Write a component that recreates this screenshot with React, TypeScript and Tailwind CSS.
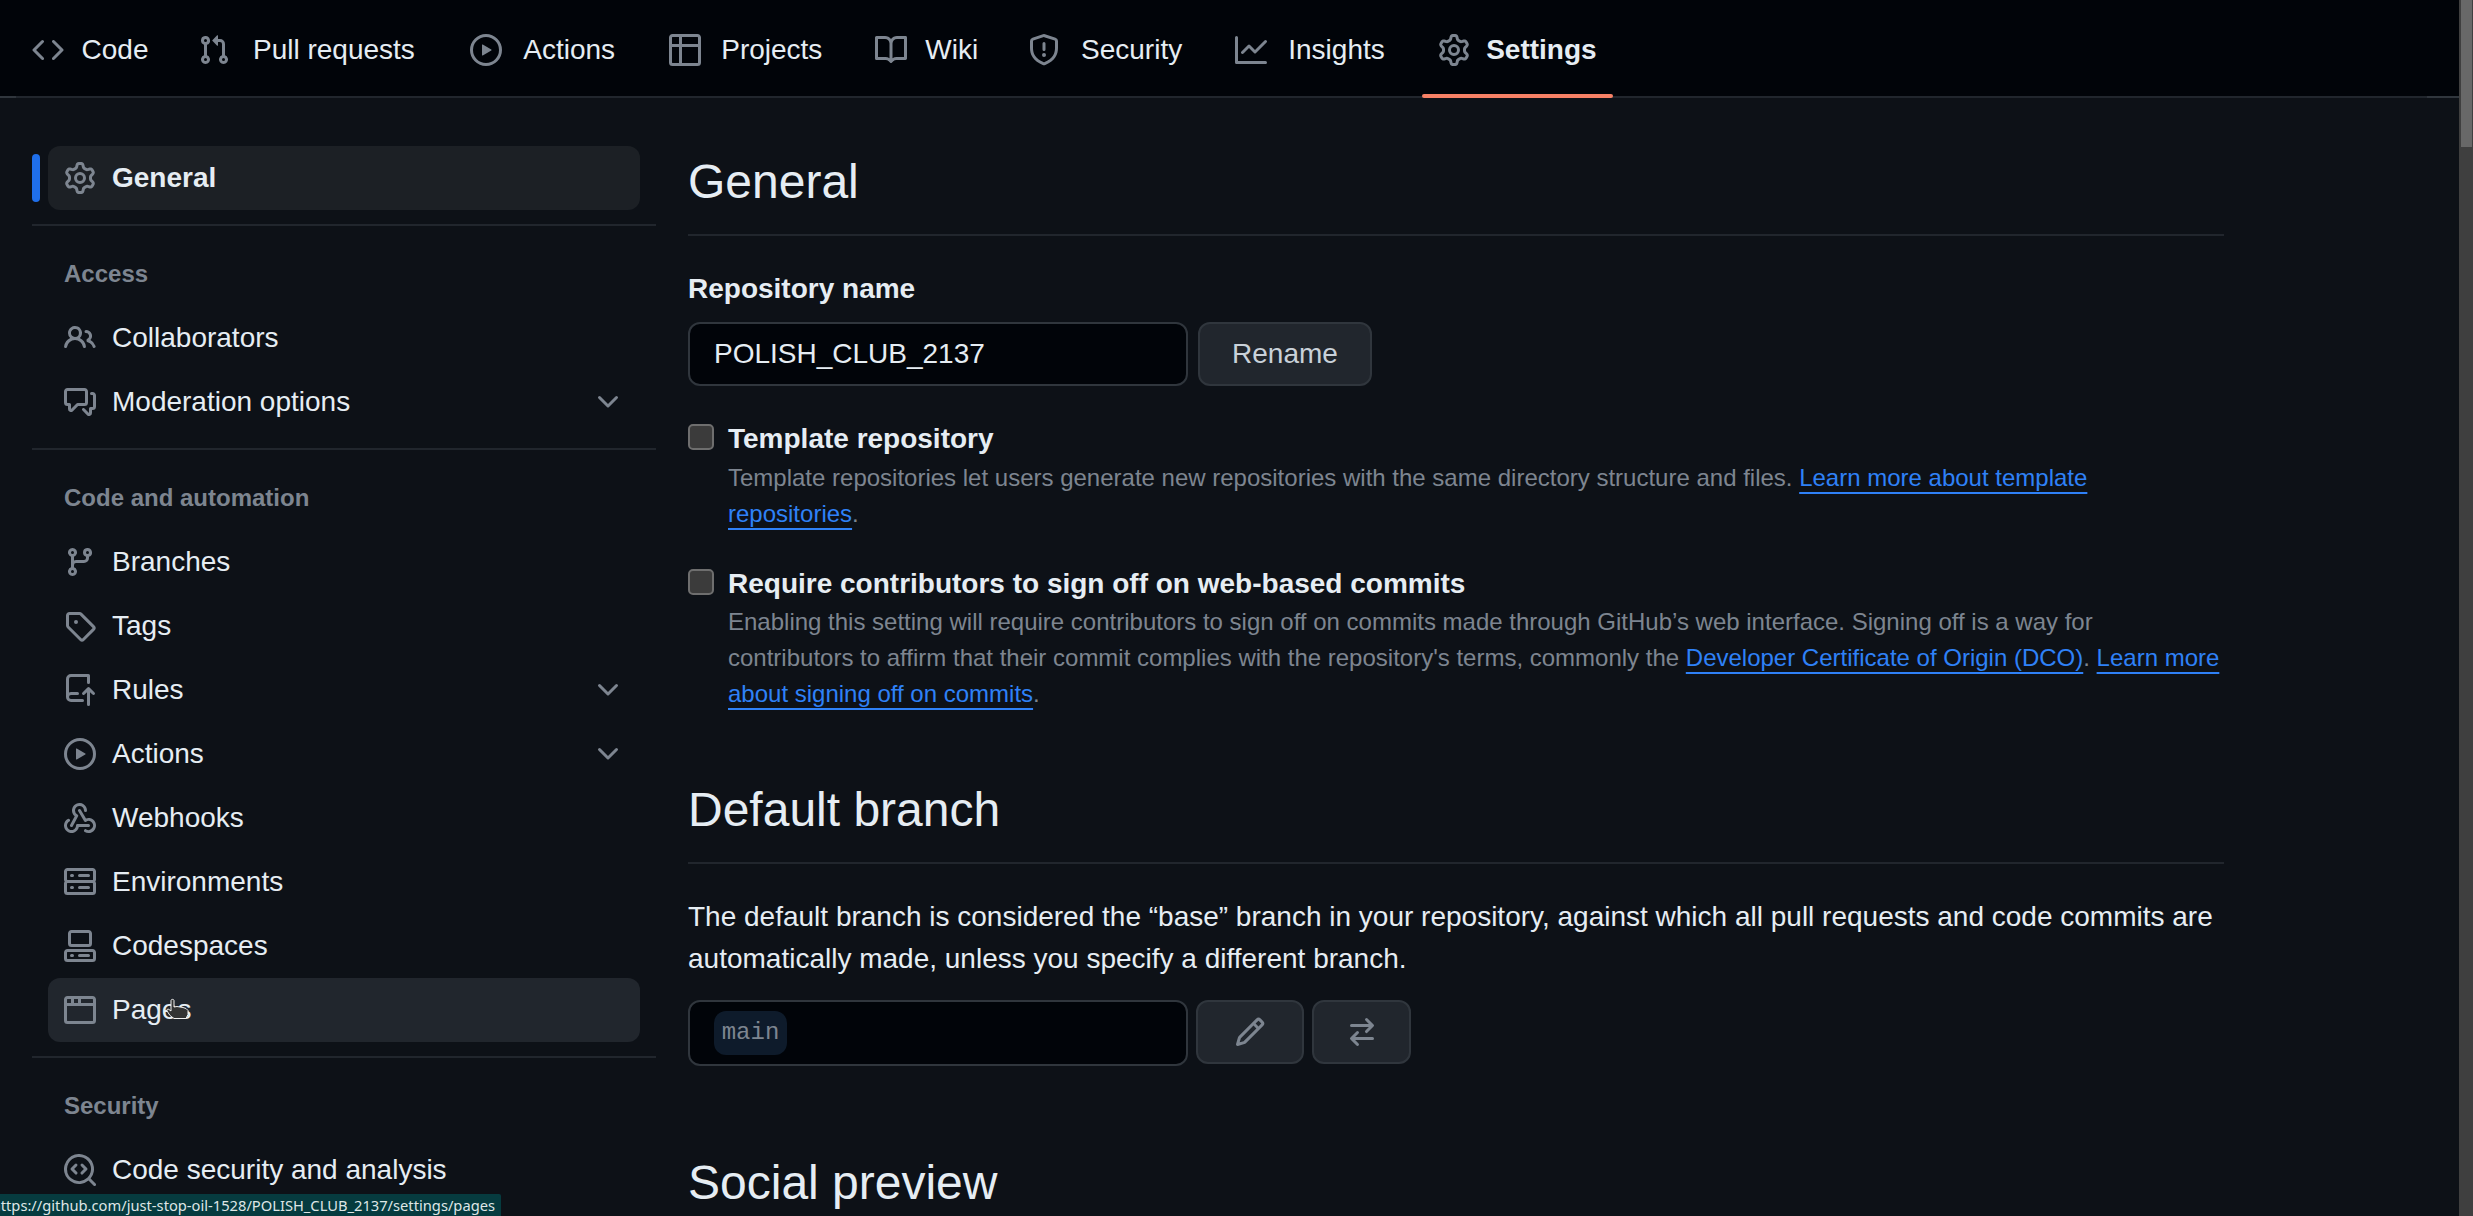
import React from "react";

type Ic = React.ComponentType<{ size?: number; className?: string }>;

const oct = (...d: string[]): Ic =>
  function Octicon({ size = 32, className }) {
    return (
      <svg width={size} height={size} viewBox="0 0 16 16" fill="currentColor" className={className}>
        {d.map((p, i) => (
          <path key={i} d={p} />
        ))}
      </svg>
    );
  };

const GoCode = oct("m11.28 3.22 4.25 4.25a.75.75 0 0 1 0 1.06l-4.25 4.25a.749.749 0 0 1-1.275-.326.749.749 0 0 1 .215-.734L13.94 8l-3.72-3.72a.749.749 0 0 1 .326-1.275.749.749 0 0 1 .734.215Zm-6.56 0a.751.751 0 0 1 1.042.018.751.751 0 0 1 .018 1.042L2.06 8l3.72 3.72a.749.749 0 0 1-.326 1.275.749.749 0 0 1-.734-.215L.47 8.53a.75.75 0 0 1 0-1.06Z");
const GoPull = oct("M1.5 3.25a2.25 2.25 0 1 1 3 2.122v5.256a2.251 2.251 0 1 1-1.5 0V5.372A2.25 2.25 0 0 1 1.5 3.25Zm5.677-.177L9.573.677A.25.25 0 0 1 10 .854V2.5h1A2.5 2.5 0 0 1 13.5 5v5.628a2.251 2.251 0 1 1-1.5 0V5a1 1 0 0 0-1-1h-1v1.646a.25.25 0 0 1-.427.177L7.177 3.427a.25.25 0 0 1 0-.354ZM3.75 2.5a.75.75 0 1 0 0 1.5.75.75 0 0 0 0-1.5Zm0 9.5a.75.75 0 1 0 0 1.5.75.75 0 0 0 0-1.5Zm8.25.75a.75.75 0 1 0 1.5 0 .75.75 0 0 0-1.5 0Z");
const GoPlay = oct("M8 0a8 8 0 1 1 0 16A8 8 0 0 1 8 0ZM1.5 8a6.5 6.5 0 1 0 13 0 6.5 6.5 0 0 0-13 0Zm4.879-2.773 4.264 2.559a.25.25 0 0 1 0 .428l-4.264 2.559A.25.25 0 0 1 6 10.559V5.442a.25.25 0 0 1 .379-.215Z");
const GoTable = oct("M0 1.75C0 .784.784 0 1.75 0h12.5C15.216 0 16 .784 16 1.75v12.5A1.75 1.75 0 0 1 14.25 16H1.75A1.75 1.75 0 0 1 0 14.25ZM6.5 6.5v8h7.75a.25.25 0 0 0 .25-.25V6.5Zm8-1.5V1.75a.25.25 0 0 0-.25-.25H6.5V5Zm-13 1.5v7.75c0 .138.112.25.25.25H5v-8ZM5 5V1.5H1.75a.25.25 0 0 0-.25.25V5Z");
const GoBook = oct("M0 1.75A.75.75 0 0 1 .75 1h4.253c1.227 0 2.317.59 3 1.501A3.743 3.743 0 0 1 11.006 1h4.245a.75.75 0 0 1 .75.75v10.5a.75.75 0 0 1-.75.75h-4.507a2.25 2.25 0 0 0-1.591.659l-.622.621a.75.75 0 0 1-1.06 0l-.622-.621A2.25 2.25 0 0 0 5.258 13H.75a.75.75 0 0 1-.75-.75Zm7.251 10.324.004-5.073-.002-2.253A2.25 2.25 0 0 0 5.003 2.5H1.5v9h3.757a3.75 3.75 0 0 1 1.994.574ZM8.755 4.75l-.004 7.322a3.752 3.752 0 0 1 1.992-.572H14.5v-9h-3.495a2.25 2.25 0 0 0-2.25 2.25Z");
const GoShield = oct("M7.467.133a1.748 1.748 0 0 1 1.066 0l5.25 1.68A1.75 1.75 0 0 1 15 3.48V7c0 1.566-.32 3.182-1.303 4.682-.983 1.498-2.585 2.813-5.032 3.855a1.697 1.697 0 0 1-1.33 0c-2.447-1.042-4.049-2.357-5.032-3.855C1.32 10.182 1 8.566 1 7V3.48a1.75 1.75 0 0 1 1.217-1.667Zm.61 1.429a.25.25 0 0 0-.153 0l-5.25 1.68a.25.25 0 0 0-.174.238V7c0 1.358.275 2.666 1.057 3.86.784 1.194 2.121 2.34 4.366 3.297a.196.196 0 0 0 .154 0c2.245-.956 3.582-2.104 4.366-3.298C13.225 9.666 13.5 8.36 13.5 7V3.48a.251.251 0 0 0-.174-.237l-5.25-1.68ZM8.75 4.75v3a.75.75 0 0 1-1.5 0v-3a.75.75 0 0 1 1.5 0ZM9 10.5a1 1 0 1 1-2 0 1 1 0 0 1 2 0Z");
const GoGraph = oct("M1.5 1.75V13.5h13.75a.75.75 0 0 1 0 1.5H.75a.75.75 0 0 1-.75-.75V1.75a.75.75 0 0 1 1.5 0Zm14.28 2.53-5.25 5.25a.75.75 0 0 1-1.06 0L7 7.06 4.28 9.78a.751.751 0 0 1-1.042-.018.751.751 0 0 1-.018-1.042l3.25-3.25a.75.75 0 0 1 1.06 0L10 7.94l4.72-4.72a.751.751 0 0 1 1.042.018.751.751 0 0 1 .018 1.042Z");
const GoGear = oct("M8 0a8.2 8.2 0 0 1 .701.031C9.444.095 9.99.645 10.16 1.29l.288 1.107c.018.066.079.158.212.224.231.114.454.243.668.386.123.082.233.09.299.071l1.103-.303c.644-.176 1.392.021 1.82.63.27.385.506.792.704 1.218.315.675.111 1.422-.364 1.891l-.814.806c-.049.048-.098.147-.088.294.016.257.016.515 0 .772-.01.147.038.246.088.294l.814.806c.475.469.679 1.216.364 1.891a7.977 7.977 0 0 1-.704 1.217c-.428.61-1.176.807-1.82.63l-1.102-.302c-.067-.019-.177-.011-.3.071a5.909 5.909 0 0 1-.668.386c-.133.066-.194.158-.211.224l-.29 1.106c-.168.646-.715 1.196-1.458 1.26a8.006 8.006 0 0 1-1.402 0c-.743-.064-1.289-.614-1.458-1.26l-.289-1.106c-.018-.066-.079-.158-.212-.224a5.738 5.738 0 0 1-.668-.386c-.123-.082-.233-.09-.299-.071l-1.103.303c-.644.176-1.392-.021-1.82-.63a8.12 8.12 0 0 1-.704-1.218c-.315-.675-.111-1.422.363-1.891l.815-.806c.05-.048.098-.147.088-.294a6.214 6.214 0 0 1 0-.772c.01-.147-.038-.246-.088-.294l-.815-.806C.635 6.045.431 5.298.746 4.623a7.92 7.92 0 0 1 .704-1.217c.428-.61 1.176-.807 1.82-.63l1.102.302c.067.019.177.011.3-.071.214-.143.437-.272.668-.386.133-.066.194-.158.211-.224l.29-1.106C6.009.645 6.556.095 7.299.03 7.53.01 7.764 0 8 0Zm-.571 1.525c-.036.003-.108.036-.137.146l-.289 1.105c-.147.561-.549.967-.998 1.189-.173.086-.34.183-.5.29-.417.278-.97.423-1.529.27l-1.103-.303c-.109-.03-.175.016-.195.045-.22.312-.412.644-.573.99-.014.031-.021.11.059.19l.815.806c.411.406.562.957.53 1.456a4.709 4.709 0 0 0 0 .582c.032.499-.119 1.05-.53 1.456l-.815.806c-.081.08-.073.159-.059.19.162.346.353.677.573.989.02.03.085.076.195.046l1.102-.303c.56-.153 1.113-.008 1.53.27.161.107.328.204.501.29.447.222.85.629.997 1.189l.289 1.105c.029.109.101.143.137.146a6.6 6.6 0 0 0 1.142 0c.036-.003.108-.036.137-.146l.289-1.105c.147-.561.549-.967.998-1.189.173-.086.34-.183.5-.29.417-.278.97-.423 1.529-.27l1.103.303c.109.029.175-.016.195-.045.22-.313.411-.644.573-.99.014-.031.021-.11-.059-.19l-.815-.806c-.411-.406-.562-.957-.53-1.456a4.709 4.709 0 0 0 0-.582c-.032-.499.119-1.05.53-1.456l.815-.806c.081-.08.073-.159.059-.19a6.464 6.464 0 0 0-.573-.989c-.02-.03-.085-.076-.195-.046l-1.102.303c-.56.153-1.113.008-1.53-.27a4.44 4.44 0 0 0-.501-.29c-.447-.222-.85-.629-.997-1.189l-.289-1.105c-.029-.11-.101-.143-.137-.146a6.6 6.6 0 0 0-1.142 0ZM11 8a3 3 0 1 1-6 0 3 3 0 0 1 6 0ZM9.5 8a1.5 1.5 0 1 0-3.001.001A1.5 1.5 0 0 0 9.5 8Z");
const GoPeople = oct("M2 5.5a3.5 3.5 0 1 1 5.898 2.549 5.508 5.508 0 0 1 3.034 4.084.75.75 0 1 1-1.482.235 4 4 0 0 0-7.9 0 .75.75 0 0 1-1.482-.236A5.507 5.507 0 0 1 3.102 8.05 3.493 3.493 0 0 1 2 5.5ZM11 4a3.001 3.001 0 0 1 2.22 5.018 5.01 5.01 0 0 1 2.56 3.012.749.749 0 0 1-.885.954.752.752 0 0 1-.549-.514 3.507 3.507 0 0 0-2.522-2.372.75.75 0 0 1-.574-.73v-.352a.75.75 0 0 1 .416-.672A1.5 1.5 0 0 0 11 5.5.75.75 0 0 1 11 4Zm-5.5-.5a2 2 0 1 0-.001 3.999A2 2 0 0 0 5.5 3.5Z");
const GoComment = oct("M1.75 1h8.5c.966 0 1.75.784 1.75 1.75v5.5A1.75 1.75 0 0 1 10.25 10H7.061l-2.574 2.573A1.458 1.458 0 0 1 2 11.543V10h-.25A1.75 1.75 0 0 1 0 8.25v-5.5C0 1.784.784 1 1.75 1ZM1.5 2.75v5.5c0 .138.112.25.25.25h1a.75.75 0 0 1 .75.75v2.19l2.72-2.72a.749.749 0 0 1 .53-.22h3.5a.25.25 0 0 0 .25-.25v-5.5a.25.25 0 0 0-.25-.25h-8.5a.25.25 0 0 0-.25.25Zm13 2a.25.25 0 0 0-.25-.25h-.5a.75.75 0 0 1 0-1.5h.5c.966 0 1.75.784 1.75 1.75v5.5A1.75 1.75 0 0 1 14.25 12H14v1.543a1.458 1.458 0 0 1-2.487 1.03L9.22 12.28a.749.749 0 0 1 .326-1.275.749.749 0 0 1 .734.215l2.22 2.22v-2.19a.75.75 0 0 1 .75-.75h1a.25.25 0 0 0 .25-.25Z");
const GoBranch = oct("M9.5 3.25a2.25 2.25 0 1 1 3 2.122V6A2.5 2.5 0 0 1 10 8.5H6a1 1 0 0 0-1 1v1.128a2.251 2.251 0 1 1-1.5 0V5.372a2.25 2.25 0 1 1 1.5 0v1.836A2.493 2.493 0 0 1 6 7h4a1 1 0 0 0 1-1v-.628A2.25 2.25 0 0 1 9.5 3.25Zm-6 0a.75.75 0 1 0 1.5 0 .75.75 0 0 0-1.5 0Zm8.25-.75a.75.75 0 1 0 0 1.5.75.75 0 0 0 0-1.5ZM4.25 12a.75.75 0 1 0 0 1.5.75.75 0 0 0 0-1.5Z");
const GoTag = oct("M1 7.775V2.75C1 1.784 1.784 1 2.75 1h5.025c.464 0 .91.184 1.238.513l6.25 6.25a1.75 1.75 0 0 1 0 2.474l-5.026 5.026a1.75 1.75 0 0 1-2.474 0l-6.25-6.25A1.752 1.752 0 0 1 1 7.775Zm1.5 0c0 .066.026.13.073.177l6.25 6.25a.25.25 0 0 0 .354 0l5.025-5.025a.25.25 0 0 0 0-.354l-6.25-6.25a.25.25 0 0 0-.177-.073H2.75a.25.25 0 0 0-.25.25ZM6 5a1 1 0 1 1 0 2 1 1 0 0 1 0-2Z");
const GoRepoPush = oct("M1 2.5A2.5 2.5 0 0 1 3.5 0h8.75a.75.75 0 0 1 .75.75v3.5a.75.75 0 0 1-1.5 0V1.5h-8a1 1 0 0 0-1 1v6.708A2.493 2.493 0 0 1 3.5 9h3.25a.75.75 0 0 1 0 1.5H3.5a1 1 0 0 0 0 2h5.75a.75.75 0 0 1 0 1.5H3.5A2.5 2.5 0 0 1 1 11.5Zm13.23 7.79h-.001l-1.224-1.224v6.184a.75.75 0 0 1-1.5 0V9.066L10.28 10.29a.75.75 0 0 1-1.06-1.061l2.505-2.504a.75.75 0 0 1 1.06 0L15.29 9.23a.751.751 0 0 1-.018 1.042.751.751 0 0 1-1.042.018Z");
const GoWebhook = oct(
  "M5.5 4.25a2.25 2.25 0 0 1 4.5 0 .75.75 0 0 0 1.5 0 3.75 3.75 0 1 0-6.14 2.889l-2.272 4.258a.75.75 0 0 0 1.324.706L7 7.25a.75.75 0 0 0-.309-1.015A2.25 2.25 0 0 1 5.5 4.25Z",
  "M7.364 3.607a.75.75 0 0 1 1.03.257l2.608 4.349a3.75 3.75 0 1 1-.628 6.785.75.75 0 0 1 .752-1.299 2.25 2.25 0 1 0-.033-3.88.75.75 0 0 1-1.03-.256L7.107 4.636a.75.75 0 0 1 .257-1.03Z",
  "M2.9 8.776A.75.75 0 0 1 2.625 9.8 2.25 2.25 0 1 0 6 11.75a.75.75 0 0 1 .75-.751h5.5a.75.75 0 0 1 0 1.5H7.425a3.751 3.751 0 1 1-5.55-3.998.75.75 0 0 1 1.024.274Z"
);
const GoServer = oct("M1.75 1h12.5c.966 0 1.75.784 1.75 1.75v4c0 .372-.116.717-.314 1 .198.283.314.628.314 1v4a1.75 1.75 0 0 1-1.75 1.75H1.75A1.75 1.75 0 0 1 0 12.75v-4c0-.358.109-.707.314-1a1.739 1.739 0 0 1-.314-1v-4C0 1.784.784 1 1.75 1ZM1.5 2.75v4c0 .138.112.25.25.25h12.5a.25.25 0 0 0 .25-.25v-4a.25.25 0 0 0-.25-.25H1.75a.25.25 0 0 0-.25.25Zm.25 5.75a.25.25 0 0 0-.25.25v4c0 .138.112.25.25.25h12.5a.25.25 0 0 0 .25-.25v-4a.25.25 0 0 0-.25-.25ZM7 4.75A.75.75 0 0 1 7.75 4h4.5a.75.75 0 0 1 0 1.5h-4.5A.75.75 0 0 1 7 4.75ZM7.75 10h4.5a.75.75 0 0 1 0 1.5h-4.5a.75.75 0 0 1 0-1.5ZM3 4.75A.75.75 0 0 1 3.75 4h.5a.75.75 0 0 1 0 1.5h-.5A.75.75 0 0 1 3 4.75ZM3.75 10h.5a.75.75 0 0 1 0 1.5h-.5a.75.75 0 0 1 0-1.5Z");
const GoCodespaces = oct(
  "M0 11.25c0-.966.784-1.75 1.75-1.75h12.5c.966 0 1.75.784 1.75 1.75v3A1.75 1.75 0 0 1 14.25 16H1.75A1.75 1.75 0 0 1 0 14.25Zm2-9.5C2 .784 2.784 0 3.75 0h8.5C13.216 0 14 .784 14 1.75v5a1.75 1.75 0 0 1-1.75 1.75h-8.5A1.75 1.75 0 0 1 2 6.75Zm1.75-.25a.25.25 0 0 0-.25.25v5c0 .138.112.25.25.25h8.5a.25.25 0 0 0 .25-.25v-5a.25.25 0 0 0-.25-.25Zm-2 9.5a.25.25 0 0 0-.25.25v3c0 .138.112.25.25.25h12.5a.25.25 0 0 0 .25-.25v-3a.25.25 0 0 0-.25-.25Z",
  "M7 12.75a.75.75 0 0 1 .75-.75h4.5a.75.75 0 0 1 0 1.5h-4.5a.75.75 0 0 1-.75-.75Zm-4 0a.75.75 0 0 1 .75-.75h.5a.75.75 0 0 1 0 1.5h-.5a.75.75 0 0 1-.75-.75Z"
);
const GoBrowser = oct("M0 2.75C0 1.784.784 1 1.75 1h12.5c.966 0 1.75.784 1.75 1.75v10.5A1.75 1.75 0 0 1 14.25 15H1.75A1.75 1.75 0 0 1 0 13.25ZM14.5 6h-13v7.25c0 .138.112.25.25.25h12.5a.25.25 0 0 0 .25-.25Zm-6-3.5v2h6V2.75a.25.25 0 0 0-.25-.25ZM5 2.5v2h2v-2Zm-3.25 0a.25.25 0 0 0-.25.25V4.5h2v-2Z");
const GoCodescan = oct(
  "M8.47 4.97a.75.75 0 0 0 0 1.06L9.94 7.5 8.47 8.97a.75.75 0 1 0 1.06 1.06l2-2a.75.75 0 0 0 0-1.06l-2-2a.75.75 0 0 0-1.06 0ZM6.53 6.03a.75.75 0 0 0-1.06-1.06l-2 2a.75.75 0 0 0 0 1.06l2 2a.75.75 0 1 0 1.06-1.06L5.06 7.5l1.47-1.47Z",
  "M12.246 13.307a7.501 7.501 0 1 1 1.06-1.06l2.474 2.473a.749.749 0 0 1-.326 1.275.749.749 0 0 1-.734-.215ZM1.5 7.5a6.002 6.002 0 0 0 3.608 5.504 6.002 6.002 0 0 0 6.486-1.117.748.748 0 0 1 .292-.293A6 6 0 1 0 1.5 7.5Z"
);
const GoChevronDown = oct("M12.78 5.22a.749.749 0 0 1 0 1.06l-4.25 4.25a.749.749 0 0 1-1.06 0L3.22 6.28a.749.749 0 1 1 1.06-1.06L8 8.939l3.72-3.719a.749.749 0 0 1 1.06 0Z");
const GoPencil = oct("M11.013 1.427a1.75 1.75 0 0 1 2.474 0l1.086 1.086a1.75 1.75 0 0 1 0 2.474l-8.61 8.61c-.21.21-.47.364-.756.445l-3.251.93a.75.75 0 0 1-.927-.928l.929-3.25c.081-.286.235-.547.445-.758l8.61-8.61Zm.176 4.823L9.75 4.81l-6.286 6.287a.253.253 0 0 0-.064.108l-.558 1.953 1.953-.558a.253.253 0 0 0 .108-.064Zm1.238-3.763a.25.25 0 0 0-.354 0L10.811 3.75l1.439 1.44 1.263-1.263a.25.25 0 0 0 0-.354Z");
const GoArrowSwitch = oct("M5.22 14.78a.75.75 0 0 0 1.06-1.06L4.56 12h8.69a.75.75 0 0 0 0-1.5H4.56l1.72-1.72a.75.75 0 0 0-1.06-1.06l-3 3a.75.75 0 0 0 0 1.06l3 3Zm5.56-6.5a.75.75 0 1 1-1.06-1.06l1.72-1.72H2.75a.75.75 0 0 1 0-1.5h8.69L9.72 2.28a.75.75 0 0 1 1.06-1.06l3 3a.75.75 0 0 1 0 1.06l-3 3Z");

const tabs: { label: string; icon: Ic; active?: boolean }[] = [
  { label: "Code", icon: GoCode },
  { label: "Pull requests", icon: GoPull },
  { label: "Actions", icon: GoPlay },
  { label: "Projects", icon: GoTable },
  { label: "Wiki", icon: GoBook },
  { label: "Security", icon: GoShield },
  { label: "Insights", icon: GoGraph },
  { label: "Settings", icon: GoGear, active: true },
];

function Tab({ label, icon: Icon, active }: { label: string; icon: Ic; active?: boolean }) {
  return (
    <div className="relative flex h-[94px] items-center gap-4 px-4 pt-[5px]">
      <Icon size={32} className="shrink-0 text-[#7d8590]" />
      <span
        data-content={label}
        className={`flex flex-col items-center text-[#e6edf3] before:invisible before:block before:h-0 before:overflow-hidden before:font-bold before:content-[attr(data-content)] ${active ? "font-bold" : ""}`}
      >
        {label}
      </span>
      {active && <span className="absolute inset-x-0 -bottom-[4px] h-[4px] rounded-[3px] bg-[#f78166]" />}
    </div>
  );
}

function Item({ label, icon: Icon, chevron, bg, bold }: { label: string; icon: Ic; chevron?: boolean; bg?: string; bold?: boolean }) {
  return (
    <div className={`mx-4 flex h-16 items-center gap-4 rounded-xl px-4 ${bg ?? ""}`}>
      <Icon size={32} className="shrink-0 text-[#7d8590]" />
      <span className={`flex-1 text-[#e6edf3] ${bold ? "font-bold" : ""}`}>{label}</span>
      {chevron && <GoChevronDown size={32} className="shrink-0 text-[#7d8590]" />}
    </div>
  );
}

function Group({ title }: { title: string }) {
  return (
    <>
      <div className="mt-[14px] h-[2px] bg-[#21262d]" />
      <div className="ml-8 mt-[30px] mb-[14px] h-9 text-[24px] font-bold leading-9 text-[#7d8590]">{title}</div>
    </>
  );
}

function A({ children }: { children: React.ReactNode }) {
  return (
    <a className="text-[#2f81f7] underline decoration-2 underline-offset-[6px] [text-decoration-skip-ink:none]">{children}</a>
  );
}

function Check({ title, children, descClass }: { title: string; children: React.ReactNode; descClass: string }) {
  return (
    <div className="flex gap-[14px]">
      <div className="mt-[4px] h-[26px] w-[26px] shrink-0 rounded-[5px] border-2 border-[#6e6e6e] bg-[#3b3b3b]" />
      <div className="flex-1">
        <div className="mt-[1px] h-[36px] font-bold leading-[36px] text-[#e6edf3]">{title}</div>
        <p className={`text-[24px] leading-9 text-[#7d8590] ${descClass}`}>{children}</p>
      </div>
    </div>
  );
}

function Heading({ children, className }: { children: React.ReactNode; className?: string }) {
  return (
    <h2 className={`border-b-2 border-[#21262d] text-[48px] font-normal leading-[60px] text-[#e6edf3] ${className ?? ""}`}>{children}</h2>
  );
}

export default function App() {
  return (
    <div className="relative flex h-screen w-screen overflow-hidden bg-[#0d1117] font-['Liberation_Sans',Arial,sans-serif] text-[28px] text-[#e6edf3]">
      <div className="min-w-0 flex-1">
        <header className="h-[98px] border-b-2 border-[#30363d] bg-[#010409]">
          <nav className="ml-4 mr-8 flex h-[98px] gap-4 border-b-2 border-[#21262d]">
            {tabs.map((t) => (
              <Tab key={t.label} {...t} />
            ))}
          </nav>
        </header>
        <div className="flex">
          <aside className="ml-8 w-[624px] shrink-0 pt-[48px]">
            <div className="relative">
              <span className="absolute left-0 top-2 h-12 w-2 rounded-md bg-[#1f6feb]" />
              <Item label="General" icon={GoGear} bg="bg-[#1c2025]" bold />
            </div>
            <Group title="Access" />
            <Item label="Collaborators" icon={GoPeople} />
            <Item label="Moderation options" icon={GoComment} chevron />
            <Group title="Code and automation" />
            <Item label="Branches" icon={GoBranch} />
            <Item label="Tags" icon={GoTag} />
            <Item label="Rules" icon={GoRepoPush} chevron />
            <Item label="Actions" icon={GoPlay} chevron />
            <Item label="Webhooks" icon={GoWebhook} />
            <Item label="Environments" icon={GoServer} />
            <Item label="Codespaces" icon={GoCodespaces} />
            <Item label="Pages" icon={GoBrowser} bg="bg-[#21262d]" />
            <Group title="Security" />
            <Item label="Code security and analysis" icon={GoCodescan} />
          </aside>
          <main className="ml-8 w-[1536px] shrink-0 pt-[54px]">
            <Heading className="pb-[22px]">General</Heading>
            <div className="mt-[35px] h-9 font-bold leading-9 text-[#e6edf3]">Repository name</div>
            <div className="mt-[15px] flex gap-[10px]">
              <div className="flex h-16 w-[500px] items-center rounded-xl border-2 border-[#30363d] bg-[#010409] px-6">POLISH_CLUB_2137</div>
              <div className="flex h-16 w-[174px] items-center justify-center rounded-xl border-2 border-[#30363d] bg-[#21262d] text-[#c9d1d9]">Rename</div>
            </div>
            <div className="mt-[34px]">
              <Check title="Template repository" descClass="mt-[3px]">
                Template repositories let users generate new repositories with the same directory structure and files. <A>Learn more about template repositories</A>.
              </Check>
            </div>
            <div className="mt-[33px]">
              <Check title="Require contributors to sign off on web-based commits" descClass="mt-[2px]">
                Enabling this setting will require contributors to sign off on commits made through GitHub’s web interface. Signing off is a way for contributors to affirm that their commit complies with the repository's terms, commonly the <A>Developer Certificate of Origin (DCO)</A>. <A>Learn more about signing off on commits</A>.
              </Check>
            </div>
            <Heading className="mt-[68px] pb-[22px]">Default branch</Heading>
            <p className="mt-[32px] leading-[42px] text-[#e6edf3]">
              The default branch is considered the “base” branch in your repository, against which all pull requests and code commits are automatically made, unless you specify a different branch.
            </p>
            <div className="mt-[20px] flex items-start">
              <div className="flex h-[66px] w-[500px] items-center rounded-xl border-2 border-[#30363d] bg-[#010409] px-6">
                <span className="flex h-[44px] w-[73px] items-center justify-center rounded-xl bg-[#0e1b2b] font-['Liberation_Mono',monospace] text-[24px] text-[#7d8590]">main</span>
              </div>
              <div className="ml-2 flex h-[64px] w-[108px] items-center justify-center rounded-xl border-2 border-[#30363d] bg-[#21262d]">
                <GoPencil size={32} className="text-[#7d8590]" />
              </div>
              <div className="ml-2 flex h-[64px] w-[99px] items-center justify-center rounded-xl border-2 border-[#30363d] bg-[#21262d]">
                <GoArrowSwitch size={32} className="text-[#7d8590]" />
              </div>
            </div>
            <div className="mt-[87px] text-[48px] leading-[60px] text-[#e6edf3]">Social preview</div>
          </main>
        </div>
      </div>
      <div className="flex w-[14px] shrink-0 flex-col bg-[#3f3f3f]">
        <div className="ml-[2px] mr-[1px] h-[147px] bg-[#686868]" />
      </div>
      <div className="absolute bottom-0 left-0 flex h-[22px] w-[501px] items-center justify-end overflow-hidden whitespace-nowrap rounded-tr-[2px] bg-[#063b3f] pr-[6px] font-['Noto_Sans',sans-serif] text-[14.7px] text-[#dfe6e6]">
        https://github.com/just-stop-oil-1528/POLISH_CLUB_2137/settings/pages
      </div>
      <svg className="absolute left-[165px] top-[997px]" width="26" height="24" viewBox="0 0 26 24">
        <path d="M6 3.5c0-1.5 3-1.5 3 0V10l3-.5 3 .5 3 .5 3 1 2 2v4l-2 4H9l-4-3-3-4.5c-.8-1.5 1-2.5 2-1.5l2 1.5Z" fill="#333" stroke="#f0f0f0" strokeWidth="1" />
      </svg>
    </div>
  );
}
